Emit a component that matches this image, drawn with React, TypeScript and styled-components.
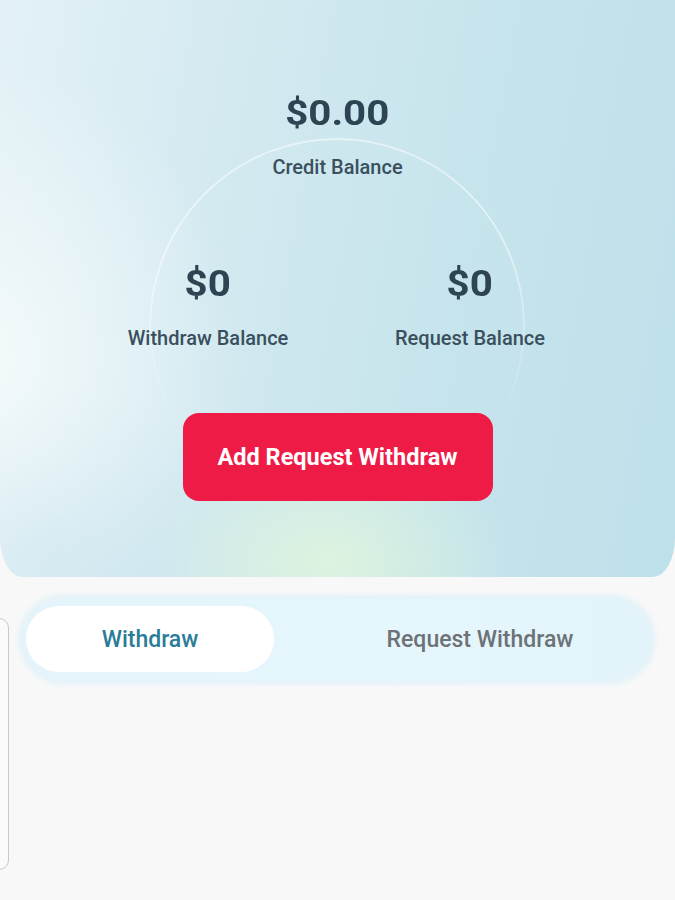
import React, { useState } from 'react'
import styled, { createGlobalStyle } from 'styled-components'

const GlobalStyle = createGlobalStyle`
    html, body {
        margin: 0;
        padding: 0;
        background: #f8f8f8;
        overflow: hidden;
    }
    * {
        box-sizing: border-box;
    }
`

const Page = styled.div`
    position: relative;
    width: 675px;
    height: 900px;
    overflow: hidden;
    background: #f8f8f8;
    font-family: Roboto, 'Liberation Sans', sans-serif;
`

const Hero = styled.section`
    position: relative;
    height: 577px;
    padding-top: 93px;
    display: flex;
    flex-direction: column;
    align-items: center;
    overflow: hidden;
    border-radius: 0 0 22px 22px / 0 0 40px 40px;
    background:
        radial-gradient(ellipse 180px 120px at 330px 560px, rgba(222, 244, 222, 0.95), rgba(222, 244, 222, 0) 100%),
        radial-gradient(ellipse 260px 300px at -20px 360px, rgba(244, 250, 251, 0.95), rgba(244, 250, 251, 0) 100%),
        radial-gradient(ellipse 200px 160px at 40px 540px, rgba(196, 224, 236, 0.7), rgba(196, 224, 236, 0) 100%),
        linear-gradient(100deg, #e3f1f6 0%, #d2e9f0 35%, #c6e4ec 65%, #bee0ea 100%);
`

/* faint decorative ring behind the balances */
const Ring = styled.div`
    position: absolute;
    top: 138px;
    left: 149px;
    width: 376px;
    height: 376px;
    border-radius: 50%;
    border: 2px solid rgba(255, 255, 255, 0.5);
    -webkit-mask-image: linear-gradient(to bottom, #000 0%, #000 30%, transparent 78%);
    mask-image: linear-gradient(to bottom, #000 0%, #000 30%, transparent 78%);
    pointer-events: none;
`

const Amount = styled.div<{ $size: number; $stretch: number }>`
    position: relative;
    font-weight: 700;
    font-size: ${(p) => p.$size}px;
    line-height: ${(p) => p.$size + 6}px;
    color: #2e4453;
    transform: scaleX(${(p) => p.$stretch});
`

const Caption = styled.div<{ $gap: number }>`
    position: relative;
    margin-top: ${(p) => p.$gap}px;
    font-size: 20px;
    line-height: 24px;
    font-weight: 500;
    color: #3a4f5d;
`

const StatsRow = styled.div`
    position: relative;
    margin-top: 84px;
    display: grid;
    grid-template-columns: 262px 262px;
    margin-left: 3px;
`

const Stat = styled.div`
    display: flex;
    flex-direction: column;
    align-items: center;
`

const ActionButton = styled.button`
    position: relative;
    margin-top: 63px;
    width: 310px;
    height: 88px;
    border: none;
    border-radius: 16px;
    background: #ee1b46;
    color: #ffffff;
    font-family: Roboto, 'Liberation Sans', sans-serif;
    font-weight: 700;
    font-size: 23.5px;
    cursor: pointer;
`

const TabBar = styled.div`
    margin: 21px 23px 0 22px;
    height: 83px;
    padding: 8px 4px 9px 4px;
    border-radius: 42px;
    background: linear-gradient(90deg, #e4f4fb 0%, #e6f6fd 60%, #e3f3fa 100%);
    box-shadow: 0 0 6px 2px rgba(214, 238, 248, 0.9);
    display: grid;
    grid-template-columns: 248px 1fr;
`

const Tab = styled.button<{ $active: boolean }>`
    border: none;
    border-radius: 33px;
    background: ${(p) => (p.$active ? '#ffffff' : 'transparent')};
    color: ${(p) => (p.$active ? '#2a7c98' : '#6c7276')};
    font-family: Roboto, 'Liberation Sans', sans-serif;
    font-size: 23px;
    font-weight: 500;
    padding: 0 0 0 ${(p) => (p.$active ? 0 : 38)}px;
    box-shadow: ${(p) => (p.$active ? '0 0 4px rgba(230, 245, 252, 0.9)' : 'none')};
    cursor: pointer;
`

/* edge of the previous slide peeking in from the left */
const SideCard = styled.div`
    position: absolute;
    left: -300px;
    top: 618px;
    width: 309px;
    height: 252px;
    border: 1.5px solid #c9c9c9;
    border-radius: 10px;
    background: #fafafa;
`

export default function App() {
    const [tab, setTab] = useState(0)

    return (
        <>
            <GlobalStyle />
            <Page>
                <Hero>
                    <Ring />
                    <Amount $size={35} $stretch={1.15}>
                        $0.00
                    </Amount>
                    <Caption $gap={21}>Credit Balance</Caption>
                    <StatsRow>
                        <Stat>
                            <Amount $size={36} $stretch={1.12}>
                                $0
                            </Amount>
                            <Caption $gap={21}>Withdraw Balance</Caption>
                        </Stat>
                        <Stat>
                            <Amount $size={36} $stretch={1.12}>
                                $0
                            </Amount>
                            <Caption $gap={21}>Request Balance</Caption>
                        </Stat>
                    </StatsRow>
                    <ActionButton>Add Request Withdraw</ActionButton>
                </Hero>
                <TabBar>
                    <Tab $active={tab === 0} onClick={() => setTab(0)}>
                        Withdraw
                    </Tab>
                    <Tab $active={tab === 1} onClick={() => setTab(1)}>
                        Request Withdraw
                    </Tab>
                </TabBar>
                <SideCard />
            </Page>
        </>
    )
}
